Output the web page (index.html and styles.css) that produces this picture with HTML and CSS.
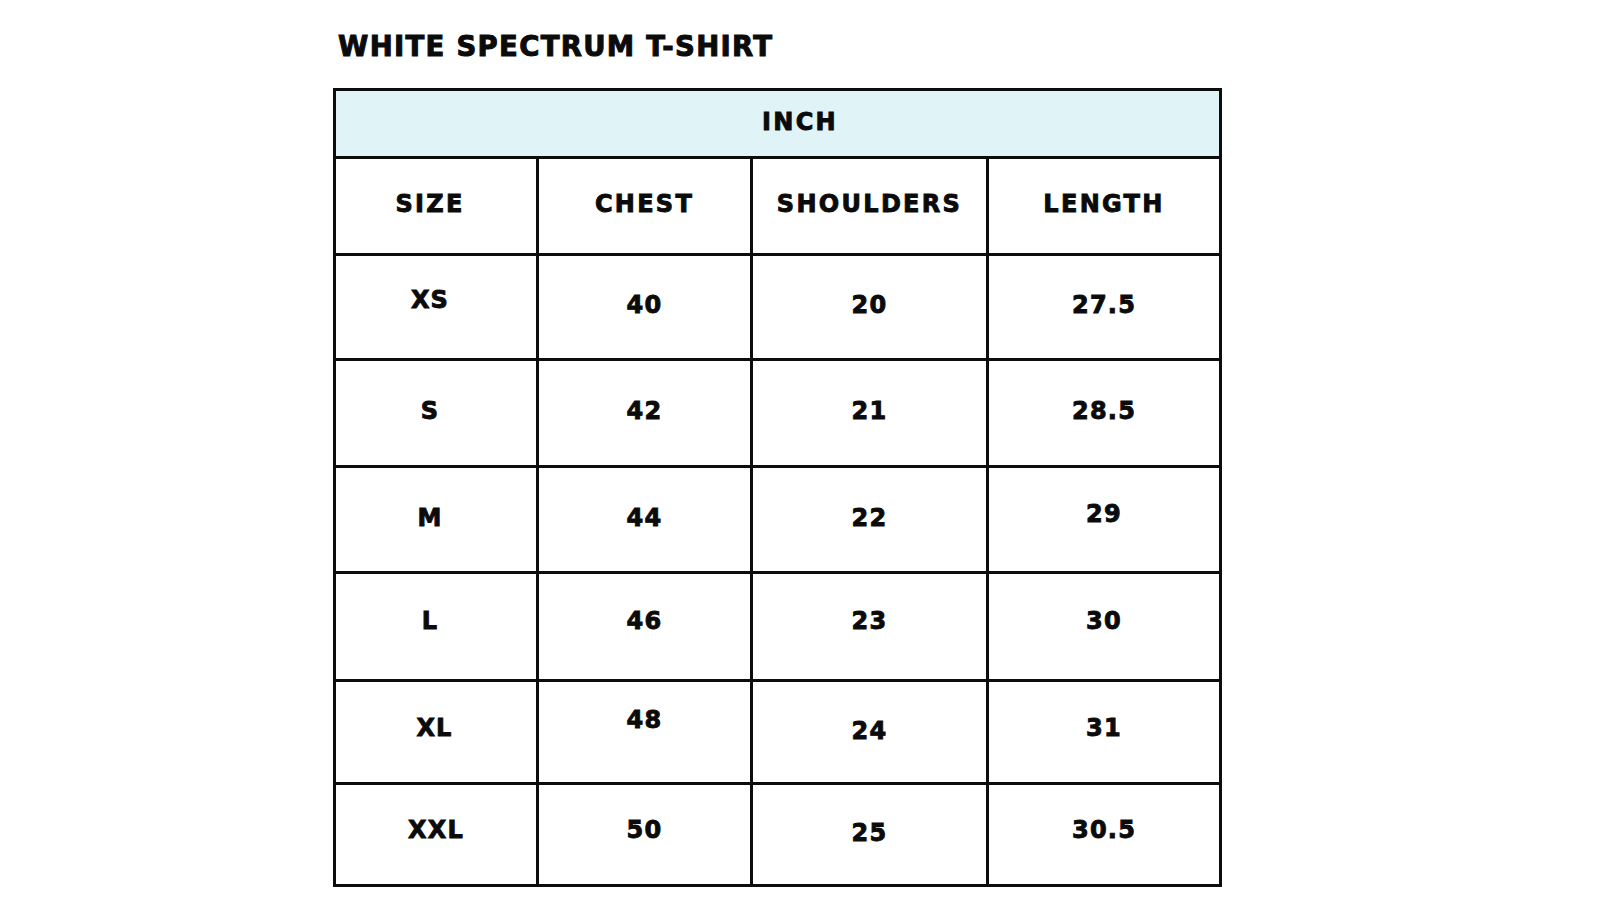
FILE: index.html
```html
<!DOCTYPE html>
<html lang="en">
<head>
<meta charset="utf-8">
<title>White Spectrum T-Shirt</title>
<link rel="stylesheet" href="styles.css">
</head>
<body>
<main class="page">
  <h1 class="title">WHITE SPECTRUM T-SHIRT</h1>
  <table class="chart">
    <colgroup>
      <col class="c1"><col class="c2"><col class="c3"><col class="c4">
    </colgroup>
    <thead>
      <tr class="band"><th colspan="4">INCH</th></tr>
      <tr class="head"><th class="size">SIZE</th><th>CHEST</th><th>SHOULDERS</th><th>LENGTH</th></tr>
    </thead>
    <tbody>
      <tr class="r1"><td class="size"><span class="up-xs">XS</span></td><td>40</td><td>20</td><td>27.5</td></tr>
      <tr class="r2"><td class="size">S</td><td>42</td><td>21</td><td>28.5</td></tr>
      <tr class="r3"><td class="size">M</td><td>44</td><td>22</td><td><span class="up">29</span></td></tr>
      <tr class="r4"><td class="size">L</td><td>46</td><td>23</td><td>30</td></tr>
      <tr class="r5"><td class="size size-xl">XL</td><td><span class="up2">48</span></td><td><span class="down">24</span></td><td>31</td></tr>
      <tr class="r6"><td class="size size-xxl">XXL</td><td>50</td><td><span class="down">25</span></td><td>30.5</td></tr>
    </tbody>
  </table>
</main>
</body>
</html>
```
FILE: styles.css
```css
html, body {
  margin: 0;
  padding: 0;
  background: #ffffff;
}

.page {
  padding: 28px 0 0 333px;
  font-family: "DejaVu Sans", "Liberation Sans", sans-serif;
  color: #0b0b0b;
}

.title {
  margin: 0 0 24px 5px;
  font-size: 27.5px;
  font-weight: 700;
  line-height: 36px;
  letter-spacing: 1.3px;
  -webkit-text-stroke: 1px #0b0b0b;
}

.chart {
  border-collapse: collapse;
  table-layout: fixed;
  width: 886px;
  border: 3px solid #0d0d0d;
}

.c1 { width: 203px; }
.c2 { width: 214px; }
.c3 { width: 236px; }
.c4 { width: 233px; }

.chart th,
.chart td {
  border: 3px solid #0d0d0d;
  padding: 0 0 4px 0;
  text-align: center;
  vertical-align: middle;
  font-size: 24px;
  font-weight: 700;
  letter-spacing: 1.2px;
  -webkit-text-stroke: 0.9px #0b0b0b;
}

.chart th {
  letter-spacing: 2.3px;
}

.band th {
  height: 61px;
  padding-left: 45px;
  background: #e0f4f7;
}

.head th {
  height: 90px;
}

.chart .size {
  padding-right: 12px;
}

.chart .size-xl {
  padding-right: 3px;
}

.chart .size-xxl {
  padding-right: 0;
}

.r1 td { height: 98px; }
.r2 td { height: 100px; }
.r3 td { height: 99px; }
.r4 td { height: 93px; padding-bottom: 12px; }
.r5 td { height: 92px; padding-bottom: 8px; }
.r6 td { height: 89px; padding-bottom: 10px; }

.up, .up2, .up-xs, .down {
  position: relative;
}

.up { top: -4px; }
.up-xs { top: -5px; }
.up2 { top: -8px; }
.down { top: 3px; }
```
